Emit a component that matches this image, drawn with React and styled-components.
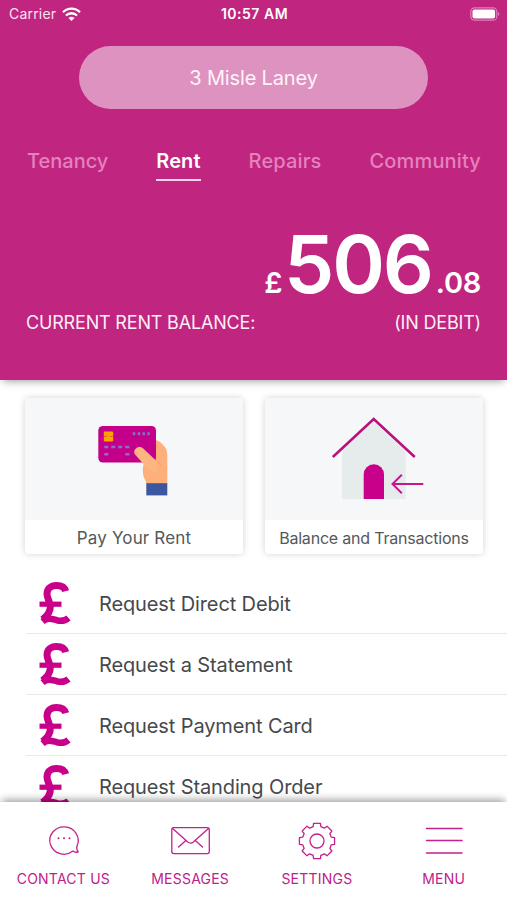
import React, { useState } from 'react'
import styled, { createGlobalStyle } from 'styled-components'

const GlobalStyle = createGlobalStyle`
	* { box-sizing: border-box; }
	body {
		margin: 0;
		background: #fff;
		font-family: Inter, "Liberation Sans", sans-serif;
	}
`

const Screen = styled.div`
	width: 507px;
	height: 900px;
	display: flex;
	flex-flow: column nowrap;
	overflow: hidden;
	background: #fff;
`

const Header = styled.header`
	flex: 0 0 380px;
	display: flex;
	flex-flow: column nowrap;
	background: #c02580;
	color: #fff;
	box-shadow: 0 4px 8px -3px rgba(0, 0, 0, 0.4);
`

const StatusBar = styled.div`
	height: 28px;
	padding: 0 7px 0 9px;
	display: grid;
	grid-template-columns: 1fr auto 1fr;
	align-items: center;
	font-size: 14px;
	line-height: 28px;
`

const Carrier = styled.span`
	display: flex;
	align-items: center;
	gap: 6px;
	letter-spacing: 0.2px;
	color: #fbe3f1;
`

const Clock = styled.span`
	font-weight: 600;
	letter-spacing: 0.5px;
`

const BatteryIcon = styled.svg`
	justify-self: end;
`

const Address = styled.button`
	align-self: center;
	width: 349px;
	height: 63px;
	margin-top: 18px;
	border: 0;
	border-radius: 32px;
	background: #de92bf;
	color: #fff3fb;
	font: 400 20px/63px Inter, sans-serif;
	letter-spacing: -0.15px;
`

const Tabs = styled.nav`
	margin-top: 38px;
	padding: 0 26px 0 27px;
	display: flex;
	justify-content: space-between;
`

const Tab = styled.button`
	height: 34px;
	padding: 0 0 3px;
	border: 0;
	border-bottom: 2px solid ${({ $active }) => ($active ? '#f9d3e9' : 'transparent')};
	background: none;
	color: ${({ $active }) => ($active ? '#fff' : '#e582bd')};
	font: ${({ $active }) => ($active ? 600 : 500)} 20px/27px Inter, sans-serif;
	letter-spacing: ${({ $spacing }) => $spacing || 0}px;
	cursor: pointer;
`

const Amount = styled.div`
	margin-top: 36px;
	padding-right: 26px;
	height: 94px;
	display: flex;
	justify-content: flex-end;
	align-items: baseline;
	font-weight: 600;
	line-height: 94px;
`

const Small = styled.span`
	font-size: 29px;
	font-weight: 600;
	letter-spacing: -0.3px;
`

const Big = styled.span`
	margin: 0 4px 0 2px;
	font-size: 80px;
	letter-spacing: -2.2px;
`

const BalanceLine = styled.div`
	margin-top: 1px;
	padding: 0 26px;
	display: flex;
	justify-content: space-between;
	font-size: 18px;
	line-height: 22px;
	letter-spacing: -0.18px;
	color: #fdeef7;
`

const Content = styled.main`
	flex: 1;
	min-height: 0;
	overflow: hidden;
	padding-top: 18px;
`

const Cards = styled.div`
	padding: 0 24px 0 25px;
	display: grid;
	grid-template-columns: 1fr 1fr;
	gap: 22px;
`

const Card = styled.button`
	height: 156px;
	padding: 0;
	display: flex;
	flex-flow: column nowrap;
	border: 0;
	border-radius: 4px;
	overflow: hidden;
	background: #fff;
	box-shadow: 0 0 7px rgba(0, 0, 0, 0.18);
`

const CardArt = styled.span`
	width: 100%;
	flex: 0 0 122px;
	display: flex;
	align-items: center;
	justify-content: center;
	background: #f5f7f9;
`

const CardLabel = styled.span`
	width: 100%;
	height: 34px;
	color: #54585c;
	font: 400 ${({ $size }) => $size}px/36px Inter, sans-serif;
	letter-spacing: ${({ $spacing }) => $spacing || 0}px;
	text-align: center;
`

const List = styled.ul`
	list-style: none;
	margin: 19px 0 0 26px;
	padding: 0;
`

const Row = styled.li`
	height: 61px;
	padding-left: 12px;
	display: flex;
	align-items: center;
	gap: 25px;
	border-bottom: 1px solid #e9e9ea;
	color: #45494d;
	font-size: 20px;
	line-height: 61px;
	letter-spacing: -0.12px;
`

const RowLabel = styled.span`
	padding-top: 2px;
`

const BottomBar = styled.footer`
	position: relative;
	flex: 0 0 98px;
	padding-top: 18px;
	display: grid;
	grid-template-columns: repeat(4, 1fr);
	background: #fff;
	box-shadow: 0 -4px 8px -2px rgba(0, 0, 0, 0.4);
`

const NavItem = styled.button`
	padding: 0;
	border: 0;
	background: none;
	display: flex;
	flex-flow: column nowrap;
	align-items: center;
	color: #c0208a;
	font: 400 14px/18px Inter, sans-serif;
	letter-spacing: 0.22px;
	white-space: nowrap;
`

const NavIcon = styled.svg`
	width: 42px;
	height: 42px;
	margin-bottom: 8px;
	fill: none;
	stroke: #c4218c;
	stroke-width: 1.3;
	stroke-linecap: round;
	stroke-linejoin: round;
`

const WifiIcon = () => (
    <svg width="19" height="15" viewBox="0 0 19 15" fill="none" stroke="#fff" strokeWidth="2.3">
        <path d="M1 5.2C5.800 0.500 13.200 0.500 18 5.200" />
        <path d="M3.900 8.500C7.100 5.500 11.900 5.500 15.100 8.500" />
        <path d="M9.500 14L6.500 10.900C8.200 9.400 10.800 9.400 12.500 10.900Z" fill="#fff" stroke="none" />
    </svg>
)

const Battery = () => (
    <BatteryIcon width="30" height="14" viewBox="0 0 30 14">
        <rect x="0.8" y="0.8" width="26" height="12.4" rx="3.8" fill="none" stroke="#e07fb9" strokeWidth="1.2" />
        <rect x="2.5" y="2.5" width="22.600" height="9" rx="2" fill="#fff" />
        <path d="M28 5c1.800.6 1.800 3.400 0 4z" fill="#e07fb9" />
    </BatteryIcon>
)

const PaymentIcon = () => (
    <svg width="36" height="46" viewBox="0 0 36 46" fill="none" stroke="#c8008a" strokeWidth="7">
        <path d="M27.700 11.200C26.600 6.800 22.500 5.400 18.500 5.400C12.500 5.400 9 9 9 14C9 18.500 12.300 22 12.300 27C12.300 32 9 36 4.500 39.500" />
        <path d="M1.500 24.200H23.500" strokeWidth="5.200" />
        <path d="M4.500 41.500C10 36.800 14 39 19 40.300C23.500 41.500 27 41 30.500 38" strokeWidth="6.500" />
    </svg>
)

const PayArt = () => (
    <svg width="80" height="80" viewBox="-1 -1 80 80">
        <path d="M58 19C65 21 72.300 26 72.300 35V64H51.300C51.300 60 47.800 58 47.800 51C47.800 46 49 44 49 40Z" fill="#fdb07a" />
        <rect x="3.300" y="6" width="57.700" height="36.500" rx="4.500" fill="#c4008a" />
        <rect x="8.800" y="11.600" width="9.400" height="9.800" rx="1.200" fill="#ffa200" />
        <path d="M8.800 16.500H12.300M14.700 16.500H18.200" stroke="#d9622a" strokeWidth="0.900" />
        <path d="M37.800 13.700H40.300M42.700 13.700H45.200M47.500 13.700H50M52.300 13.700H54.800" stroke="#7f74c6" strokeWidth="3" />
        <path d="M9.300 27H13.300M16.200 27H20.200M23.200 27H27.200M30.200 27H34.400M9.300 34.200H13.300M30.200 34.200H34.400" stroke="#7f74c6" strokeWidth="2.600" />
        <path d="M40.500 35C36.500 30.500 43 24 48 28.300L62 41.500V54L52 48Z" fill="#fdb582" />
        <path d="M60.600 39.800L66 45" stroke="#f49a63" strokeWidth="0.800" />
        <rect x="51.300" y="63.200" width="21" height="12.200" fill="#3b57a0" />
    </svg>
)

const HouseArt = () => (
    <svg width="100" height="94" viewBox="-6 0 100 94">
        <path d="M12 38L43.700 8L75.700 38V87H12Z" fill="#e6ecec" />
        <path d="M33.700 87V62.500a10.150 10.150 0 0 1 20.300 0V87Z" fill="#c8008a" />
        <g fill="none" stroke="#b9107c" strokeWidth="2.500">
            <path d="M2.800 45L43.700 7L84.800 45" />
            <path d="M93.300 72H62.500M71.800 62.800L62.500 72L71.800 81.200" stroke="#c8158a" strokeWidth="2" />
        </g>
    </svg>
)

// outline of an eight tooth cog centred on 21,21
function cogPath() {
    const shape = [[-15, 14.8], [-11, 17.900], [11, 17.900], [15, 14.8]]
    const points = []
    for (let i = 0; i < 8; i++) {
        shape.forEach(([offset, radius]) => {
            const angle = ((i * 45 + offset - 90) * Math.PI) / 180
            points.push(`${(21 + radius * Math.cos(angle)).toFixed(2)} ${(21 + radius * Math.sin(angle)).toFixed(2)}`)
        })
    }
    return `M${points.join('L')}Z`
}

const navItems = [
    {
        label: 'CONTACT US',
        icon: <g transform="translate(1 -2.200)">
            <path d="M30 33.300A14.200 13.700 0 1 1 34 28.200C33.300 30.500 33.800 32.300 35.200 34C33.300 34.800 31.500 34.500 30 33.300Z" />
            <path d="M15.500 20.500h.01M21 20.500h.01M26.500 20.500h.01" strokeWidth="2" />
        </g>,
    },
    {
        label: 'MESSAGES',
        icon: <>
            <rect x="2.800" y="7.600" width="37.500" height="26" rx="2" />
            <path d="M3.600 8.400L18.800 22.100Q21.500 24.100 24.300 22.100L39.500 8.400M16.800 20.400L9.600 27.100M26.300 20.400L33.500 27.100" />
        </>,
    },
    {
        label: 'SETTINGS',
        icon: <>
            <path d={cogPath()} />
            <circle cx="21" cy="21" r="7" />
        </>,
    },
    {
        label: 'MENU',
        icon: <path d="M3.500 8.600H39M3.500 20.600H39M3.500 33H39" strokeWidth="1.500" />,
    },
]

const tabs = [
    { name: 'Tenancy', spacing: 0 },
    { name: 'Rent', spacing: 0.1 },
    { name: 'Repairs', spacing: 0.15 },
    { name: 'Community', spacing: 0.15 },
]

const requests = ['Request Direct Debit', 'Request a Statement', 'Request Payment Card', 'Request Standing Order']

const App = () => {
    const [tab, setTab] = useState('Rent')

    return (
        <Screen>
            <GlobalStyle />
            <Header>
                <StatusBar>
                    <Carrier>Carrier <WifiIcon /></Carrier>
                    <Clock>10:57 AM</Clock>
                    <Battery />
                </StatusBar>
                <Address>3 Misle Laney</Address>
                <Tabs>
                    {tabs.map(({ name, spacing }) =>
                        <Tab key={name} $active={tab === name} $spacing={spacing} onClick={() => setTab(name)}>{name}</Tab>
                    )}
                </Tabs>
                <Amount>
                    <Small>£</Small>
                    <Big>506</Big>
                    <Small>.08</Small>
                </Amount>
                <BalanceLine>
                    <span>CURRENT RENT BALANCE:</span>
                    <span>(IN DEBIT)</span>
                </BalanceLine>
            </Header>
            <Content>
                <Cards>
                    <Card>
                        <CardArt><PayArt /></CardArt>
                        <CardLabel $size={17} $spacing={0.15}>Pay Your Rent</CardLabel>
                    </Card>
                    <Card>
                        <CardArt><HouseArt /></CardArt>
                        <CardLabel $size={16} $spacing={-0.2}>Balance and Transactions</CardLabel>
                    </Card>
                </Cards>
                <List>
                    {requests.map((request) =>
                        <Row key={request}>
                            <PaymentIcon />
                            <RowLabel>{request}</RowLabel>
                        </Row>
                    )}
                </List>
            </Content>
            <BottomBar>
                {navItems.map(({ label, icon }) =>
                    <NavItem key={label}>
                        <NavIcon viewBox="0 0 42 42">{icon}</NavIcon>
                        {label}
                    </NavItem>
                )}
            </BottomBar>
        </Screen>
    )
}

export default App
